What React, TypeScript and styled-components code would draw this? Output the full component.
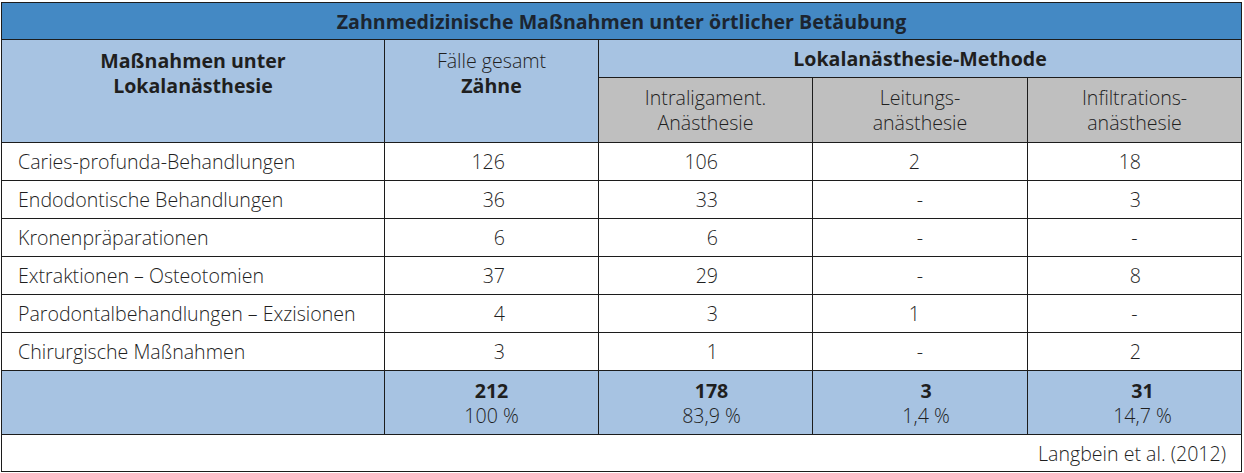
import { FC } from "react";
import styled, { createGlobalStyle } from "styled-components";

const GlobalStyle = createGlobalStyle`
    html, body {
        margin: 0;
        padding: 0;
        background: #ffffff;
    }
    body {
        font-family: "Open Sans", "Noto Sans", sans-serif;
        color: #1f1f1f;
    }
`;

const Page = styled.div`
    padding: 2px 0 0 1px;
`;

const Table = styled.table`
    width: 1240px;
    border-collapse: collapse;
    table-layout: fixed;
    border: 1px solid #1c1c1c;
    font-size: 19.6px;
    line-height: 25px;
    font-weight: 300;
`;

const TitleCell = styled.th`
    height: 36px;
    padding: 0;
    background: #4489c4;
    border: 1px solid #1c1c1c;
    font-size: 19.6px;
    font-weight: 700;
    color: #1c2530;
    text-align: center;
    vertical-align: middle;
`;

const HeadCell = styled.th<{ $gray?: boolean; $bold?: boolean; $top?: boolean }>`
    padding: ${(p) => (p.$top ? "8px 8px 0" : "0 8px")};
    background: ${(p) => (p.$gray ? "#bfbfbf" : "#a7c3e2")};
    border: 1px solid #1c1c1c;
    font-weight: ${(p) => (p.$bold ? 700 : 300)};
    text-align: center;
    vertical-align: ${(p) => (p.$top ? "top" : "middle")};
`;

const Strong = styled.span`
    font-weight: 700;
`;

const Row = styled.tr<{ $total?: boolean }>`
    height: ${(p) => (p.$total ? "64px" : "38px")};
    background: ${(p) => (p.$total ? "#a7c3e2" : "#ffffff")};
`;

const LabelCell = styled.td`
    padding: 0 0 0 16px;
    border: 1px solid #1c1c1c;
    vertical-align: middle;
    white-space: nowrap;
`;

const NumCell = styled.td<{ $pad: number; $center?: boolean }>`
    padding: ${(p) => (p.$center ? "0" : `0 ${p.$pad}px 0 0`)};
    border: 1px solid #1c1c1c;
    text-align: ${(p) => (p.$center ? "center" : "right")};
    vertical-align: middle;
`;

const TotalCell = styled.td<{ $shift: number }>`
    padding: 0 0 0 ${(p) => p.$shift}px;
    border: 1px solid #1c1c1c;
    text-align: center;
    vertical-align: middle;
`;

const TotalNum = styled.div`
    font-weight: 700;
`;

const SourceCell = styled.td`
    height: 36px;
    padding: 0 15px 0 0;
    border: 1px solid #1c1c1c;
    text-align: right;
    vertical-align: middle;
`;

const pads = [93, 94, 107, 100];

const rows: [string, string[]][] = [
    ["Caries-profunda-Behandlungen", ["126", "106", "2", "18"]],
    ["Endodontische Behandlungen", ["36", "33", "-", "3"]],
    ["Kronenpräparationen", ["6", "6", "-", "-"]],
    ["Extraktionen – Osteotomien", ["37", "29", "-", "8"]],
    ["Parodontalbehandlungen – Exzisionen", ["4", "3", "1", "-"]],
    ["Chirurgische Maßnahmen", ["3", "1", "-", "2"]],
];

const totals = [
    { n: "212", p: "100 %", shift: 0 },
    { n: "178", p: "83,9 %", shift: 12 },
    { n: "3", p: "1,4 %", shift: 12 },
    { n: "31", p: "14,7 %", shift: 16 },
];

const App: FC = () => {
    return (
        <Page>
            <GlobalStyle />
            <Table>
                <colgroup>
                    <col style={{ width: 383 }} />
                    <col style={{ width: 214 }} />
                    <col style={{ width: 214 }} />
                    <col style={{ width: 215 }} />
                    <col style={{ width: 214 }} />
                </colgroup>
                <thead>
                    <tr>
                        <TitleCell colSpan={5}>Zahnmedizinische Maßnahmen unter örtlicher Betäubung</TitleCell>
                    </tr>
                    <tr style={{ height: 38 }}>
                        <HeadCell rowSpan={2} $bold $top>
                            Maßnahmen unter
                            <br />
                            Lokalanästhesie
                        </HeadCell>
                        <HeadCell rowSpan={2} $top>
                            Fälle gesamt
                            <br />
                            <Strong>Zähne</Strong>
                        </HeadCell>
                        <HeadCell colSpan={3} $bold>Lokalanästhesie-Methode</HeadCell>
                    </tr>
                    <tr style={{ height: 65 }}>
                        <HeadCell $gray>
                            Intraligament.
                            <br />
                            Anästhesie
                        </HeadCell>
                        <HeadCell $gray>
                            Leitungs-
                            <br />
                            anästhesie
                        </HeadCell>
                        <HeadCell $gray>
                            Infiltrations-
                            <br />
                            anästhesie
                        </HeadCell>
                    </tr>
                </thead>
                <tbody>
                    {rows.map(([label, vals]) => (
                        <Row key={label}>
                            <LabelCell>{label}</LabelCell>
                            {vals.map((v, i) => (
                                <NumCell key={i} $pad={pads[i]} $center={v === "-"}>
                                    {v}
                                </NumCell>
                            ))}
                        </Row>
                    ))}
                    <Row $total>
                        <LabelCell />
                        {totals.map((t) => (
                            <TotalCell key={t.n} $shift={t.shift}>
                                <TotalNum>{t.n}</TotalNum>
                                {t.p}
                            </TotalCell>
                        ))}
                    </Row>
                    <tr>
                        <SourceCell colSpan={5}>Langbein et al. (2012)</SourceCell>
                    </tr>
                </tbody>
            </Table>
        </Page>
    );
};

export default App;
